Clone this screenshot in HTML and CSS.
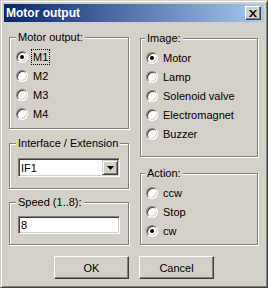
FILE: index.html
```html
<!DOCTYPE html>
<html lang="en">
<head>
    <meta charset="UTF-8">
    <title>Motor output</title>
    <link rel="stylesheet" href="styles.css">
</head>
<body>

<div class="window">
    <div class="titlebar">
        <span class="title">Motor output</span>
        <span class="close-btn">
            <svg width="8" height="7" viewBox="0 0 8 7"><path d="M0 0h2l2 2.5L6 0h2L5 3.5 8 7H6L4 4.5 2 7H0l3-3.5z" fill="#000"/></svg>
        </span>
    </div>

    <div class="content">
        <div class="col">
            <div class="group group-motor">
                <div class="group-title">Motor output:</div>
                <div class="options">
                    <div class="option"><span class="radio checked"></span><span class="label focused">M1</span></div>
                    <div class="option"><span class="radio"></span><span class="label">M2</span></div>
                    <div class="option"><span class="radio"></span><span class="label">M3</span></div>
                    <div class="option"><span class="radio"></span><span class="label">M4</span></div>
                </div>
            </div>

            <div class="group group-interface">
                <div class="group-title">Interface / Extension</div>
                <div class="combo">
                    <span class="combo-text">IF1</span>
                    <span class="combo-btn">
                        <svg width="7" height="4" viewBox="0 0 7 4"><path d="M0 0h7L3.5 4z" fill="#000"/></svg>
                    </span>
                </div>
            </div>

            <div class="group group-speed">
                <div class="group-title">Speed (1..8):</div>
                <div class="textbox">8</div>
            </div>
        </div>

        <div class="col col-right">
            <div class="group group-image">
                <div class="group-title">Image:</div>
                <div class="options">
                    <div class="option"><span class="radio checked"></span><span class="label">Motor</span></div>
                    <div class="option"><span class="radio"></span><span class="label">Lamp</span></div>
                    <div class="option"><span class="radio"></span><span class="label">Solenoid valve</span></div>
                    <div class="option"><span class="radio"></span><span class="label">Electromagnet</span></div>
                    <div class="option"><span class="radio"></span><span class="label">Buzzer</span></div>
                </div>
            </div>

            <div class="group group-action">
                <div class="group-title">Action:</div>
                <div class="options">
                    <div class="option"><span class="radio"></span><span class="label">ccw</span></div>
                    <div class="option"><span class="radio"></span><span class="label">Stop</span></div>
                    <div class="option"><span class="radio checked"></span><span class="label">cw</span></div>
                </div>
            </div>
        </div>
    </div>

    <div class="buttons">
        <div class="btn">OK</div>
        <div class="btn">Cancel</div>
    </div>
</div>

</body>
</html>
```

FILE: styles.css
```css
body {
    margin: 0;
    background-color: #d4d0c8;
    font-family: 'Liberation Sans', Arial, sans-serif;
    font-size: 11px;
    color: #000;
}
.window {
    width: 268px;
    height: 288px;
    box-sizing: border-box;
    background-color: #d4d0c8;
    border: 1px solid;
    border-color: #d4d0c8 #404040 #404040 #d4d0c8;
    box-shadow: inset 1px 1px #fff, inset -1px -1px #808080;
    padding: 3px;
}
.titlebar {
    height: 18px;
    display: flex;
    align-items: center;
    justify-content: space-between;
    padding: 0 3px 0 2px;
    background: linear-gradient(to right, #0a246a, #a6caf0);
}
.title {
    color: #fff;
    font-weight: bold;
    font-size: 12px;
}
.close-btn {
    width: 16px;
    height: 14px;
    box-sizing: border-box;
    background-color: #d4d0c8;
    border: 1px solid;
    border-color: #fff #404040 #404040 #fff;
    box-shadow: inset -1px -1px #808080;
    display: flex;
    align-items: center;
    justify-content: center;
}
.close-btn svg {
    display: block;
}
.content {
    display: grid;
    grid-template-columns: 120px 118px;
    column-gap: 11px;
    padding-left: 5px;
}
.col {
    display: flex;
    flex-direction: column;
}
.group {
    box-sizing: border-box;
    border: 1px solid #808080;
    box-shadow: inset 1px 1px #fff, 1px 1px #fff;
}
.group-title {
    width: fit-content;
    margin: -7px 0 0 6px;
    padding: 0 2px;
    line-height: 13px;
    background-color: #d4d0c8;
}
.col-right .group-title {
    margin-left: 4px;
}
.group-motor {
    margin-top: 15px;
    height: 92px;
}
.group-interface {
    margin-top: 14px;
    height: 46px;
}
.group-speed {
    margin-top: 13px;
    height: 43px;
}
.group-image {
    margin-top: 16px;
    height: 119px;
}
.group-action {
    margin-top: 16px;
    height: 72px;
}
.options {
    margin-top: 3px;
    padding-left: 6px;
}
.col-right .options {
    padding-left: 5px;
}
.option {
    height: 19px;
    display: flex;
    align-items: center;
    gap: 3px;
}
.radio {
    position: relative;
    flex: none;
    width: 12px;
    height: 12px;
    box-sizing: border-box;
    border-radius: 50%;
    background-color: #fff;
    border: 1px solid;
    border-color: #808080 #fff #fff #808080;
    box-shadow: inset 1px 1px #404040, inset -1px -1px #d4d0c8;
}
.radio.checked::after {
    content: "";
    position: absolute;
    left: 3px;
    top: 3px;
    width: 4px;
    height: 4px;
    border-radius: 50%;
    background-color: #000;
}
.label {
    line-height: 14px;
    padding: 0 1px;
    border: 1px dotted transparent;
}
.label.focused {
    border-color: #000;
}
.combo {
    margin: 8px 0 0 8px;
    width: 102px;
    height: 19px;
    box-sizing: border-box;
    background-color: #fff;
    border: 1px solid;
    border-color: #808080 #fff #fff #808080;
    box-shadow: inset 1px 1px #404040, inset -1px -1px #d4d0c8;
    display: flex;
    align-items: center;
    justify-content: space-between;
    padding: 1px 1px 1px 2px;
}
.combo-btn {
    width: 16px;
    height: 15px;
    box-sizing: border-box;
    background-color: #d4d0c8;
    border: 1px solid;
    border-color: #d4d0c8 #404040 #404040 #d4d0c8;
    box-shadow: inset 1px 1px #fff, inset -1px -1px #808080;
    display: flex;
    align-items: center;
    justify-content: center;
}
.combo-btn svg {
    display: block;
}
.textbox {
    margin: 7px 0 0 8px;
    width: 102px;
    height: 18px;
    box-sizing: border-box;
    background-color: #fff;
    border: 1px solid;
    border-color: #808080 #fff #fff #808080;
    box-shadow: inset 1px 1px #404040, inset -1px -1px #d4d0c8;
    padding-left: 2px;
    line-height: 16px;
}
.buttons {
    display: flex;
    justify-content: center;
    gap: 10px;
    margin-top: 11px;
}
.btn {
    width: 75px;
    height: 23px;
    box-sizing: border-box;
    border: 1px solid;
    border-color: #fff #404040 #404040 #fff;
    box-shadow: inset -1px -1px #808080;
    display: flex;
    align-items: center;
    justify-content: center;
}
```
